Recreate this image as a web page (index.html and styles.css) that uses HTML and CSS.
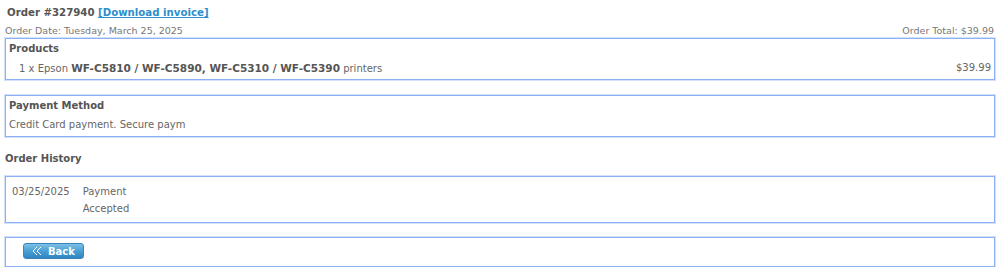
FILE: index.html
```html
<!DOCTYPE html>
<html lang="en">
<head>
    <meta charset="UTF-8">
    <title>Order #327940</title>
    <link rel="stylesheet" href="styles.css">
</head>
<body>
    <div class="cutoff">My account</div>

    <!-- Order header -->
    <h1 class="order-title">Order #327940 <a href="#">[Download invoice]</a></h1>
    <div class="order-meta">
        <span>Order Date: Tuesday, March 25, 2025</span>
        <span>Order Total: $39.99</span>
    </div>

    <!-- Products -->
    <div class="box products">
        <div class="box-title">Products</div>
        <div class="product-row">
            <span>1 x Epson <b>WF-C5810 / WF-C5890, WF-C5310 / WF-C5390</b> printers</span>
            <span>$39.99</span>
        </div>
    </div>

    <!-- Payment -->
    <div class="box payment">
        <div class="box-title">Payment Method</div>
        <div class="payment-text">Credit Card payment. Secure paym</div>
    </div>

    <!-- History -->
    <h2 class="section-title">Order History</h2>
    <div class="box history">
        <div class="history-date">03/25/2025</div>
        <div class="history-status">Payment<br>Accepted</div>
    </div>

    <!-- Back button -->
    <div class="box actions">
        <a href="#" class="back-button">
            <svg width="11" height="10" viewBox="0 0 11 10">
                <path d="M5 1 L1 5 L5 9 M9 1 L5 5 L9 9" fill="none" stroke="#ffffff" stroke-width="1"/>
            </svg>
            Back
        </a>
    </div>
</body>
</html>
```

FILE: styles.css
```css
body {
    margin: 0;
    padding: 0 4px 0 4px;
    background-color: #ffffff;
    font-family: 'DejaVu Sans', Verdana, sans-serif;
    font-size: 10px;
    color: #666666;
}
.cutoff {
    position: absolute;
    top: -12px;
    left: 918px;
    font-size: 11px;
    color: #555555;
}
.order-title {
    margin: 0;
    padding: 6px 0 0 3px;
    font-size: 10.2px;
    font-weight: bold;
    color: #555555;
    line-height: 14px;
}
.order-title a {
    color: #2d8fcb;
    text-decoration: underline;
}
.order-meta {
    display: flex;
    justify-content: space-between;
    padding: 5px 2px 1px 1px;
    font-size: 9.5px;
    line-height: 12px;
    color: #777777;
}
.box {
    border: 1px solid #8db0f4;
    box-shadow: 0 0 0 1px #d3e1fb;
    margin: 0 1px 0 1px;
}
.box-title {
    font-size: 10px;
    font-weight: bold;
    color: #555555;
    line-height: 14px;
}
.products {
    padding: 3px;
    height: 34px;
}
.product-row {
    display: flex;
    justify-content: space-between;
    padding: 5px 0 0 10px;
    font-size: 10px;
    line-height: 14px;
}
.product-row b {
    font-size: 10.5px;
    color: #555555;
}
.payment {
    margin-top: 15px;
    padding: 3px 3px 5px 3px;
    height: 32px;
}
.payment-text {
    padding-top: 5px;
    font-size: 10px;
    line-height: 14px;
}
.section-title {
    margin: 0;
    padding: 15px 0 0 1px;
    font-size: 10px;
    font-weight: bold;
    color: #555555;
    line-height: 14px;
}
.history {
    margin-top: 10px;
    display: flex;
    gap: 13px;
    padding: 6px 7px 10px 6px;
    height: 29px;
    font-size: 10px;
    line-height: 17px;
}
.actions {
    margin-top: 14px;
    padding: 5px 17px;
    height: 18px;
}
.back-button {
    display: flex;
    align-items: center;
    gap: 5px;
    width: 51px;
    height: 14px;
    padding-left: 8px;
    border-radius: 3px;
    background: linear-gradient(#7cc0e8, #4a9fd3 50%, #2f86c0);
    border: 1px solid #3b83b8;
    color: #ffffff;
    font-weight: bold;
    font-size: 10px;
    text-decoration: none;
}
```
